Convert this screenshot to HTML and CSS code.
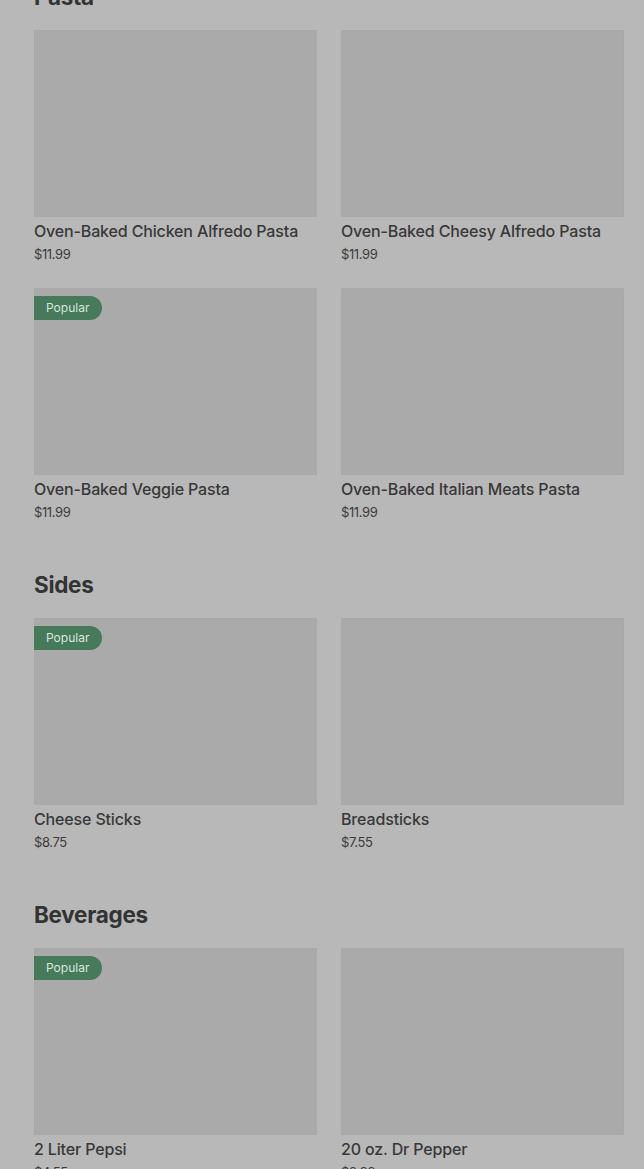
FILE: index.html
```html
<!DOCTYPE html>
<html>
<head>
<meta charset="utf-8">
<link rel="stylesheet" href="styles.css">
</head>
<body>
<main class="menu">
  <section class="section section-first">
    <h2 class="section-title">Pasta</h2>
    <div class="grid">
      <div class="card"><div class="thumb"></div><div class="name">Oven-Baked Chicken Alfredo Pasta</div><div class="price">$11.99</div></div>
      <div class="card"><div class="thumb"></div><div class="name">Oven-Baked Cheesy Alfredo Pasta</div><div class="price">$11.99</div></div>
      <div class="card"><div class="thumb"><span class="badge">Popular</span></div><div class="name">Oven-Baked Veggie Pasta</div><div class="price">$11.99</div></div>
      <div class="card"><div class="thumb"></div><div class="name">Oven-Baked Italian Meats Pasta</div><div class="price">$11.99</div></div>
    </div>
  </section>
  <section class="section">
    <h2 class="section-title">Sides</h2>
    <div class="grid">
      <div class="card"><div class="thumb"><span class="badge">Popular</span></div><div class="name">Cheese Sticks</div><div class="price">$8.75</div></div>
      <div class="card"><div class="thumb"></div><div class="name">Breadsticks</div><div class="price">$7.55</div></div>
    </div>
  </section>
  <section class="section">
    <h2 class="section-title">Beverages</h2>
    <div class="grid">
      <div class="card"><div class="thumb"><span class="badge">Popular</span></div><div class="name">2 Liter Pepsi</div><div class="price">$4.55</div></div>
      <div class="card"><div class="thumb"></div><div class="name">20 oz. Dr Pepper</div><div class="price">$2.99</div></div>
    </div>
  </section>
</main>
</body>
</html>
```

FILE: styles.css
```css
html, body {
  margin: 0;
  padding: 0;
  background: #b8b8b8;
  height: 1169px;
  overflow: hidden;
}
body {
  font-family: Inter, "Noto Sans", sans-serif;
  color: #363636;
}
.menu {
  padding: 0 20px 0 34px;
  margin-top: -19px;
}
.section {
  margin-bottom: 48px;
}
.section-title {
  margin: 0 0 17px;
  font-size: 22.5px;
  line-height: 32px;
  font-weight: 700;
  letter-spacing: -0.3px;
  color: #333;
}
.grid {
  display: grid;
  grid-template-columns: 1fr 1fr;
  column-gap: 24px;
  row-gap: 25px;
}
.card {
  display: flex;
  flex-direction: column;
}
.thumb {
  position: relative;
  height: 187px;
  background: #aaaaaa;
  box-shadow: inset 0 0 0 1px #a8a8a8;
}
.badge {
  position: absolute;
  left: 0;
  top: 8px;
  height: 24px;
  line-height: 24px;
  padding: 0 13px 0 12px;
  background: #467a5b;
  color: #d8e6dc;
  font-size: 12px;
  border-radius: 0 12px 12px 0;
}
.name {
  margin-top: 4px;
  font-size: 16px;
  line-height: 20px;
  font-weight: 500;
  letter-spacing: -0.15px;
  color: #383838;
}
.price {
  margin-top: 4px;
  font-size: 13px;
  line-height: 18px;
  font-weight: 400;
  color: #3c3c3c;
  letter-spacing: -0.4px;
}
```
